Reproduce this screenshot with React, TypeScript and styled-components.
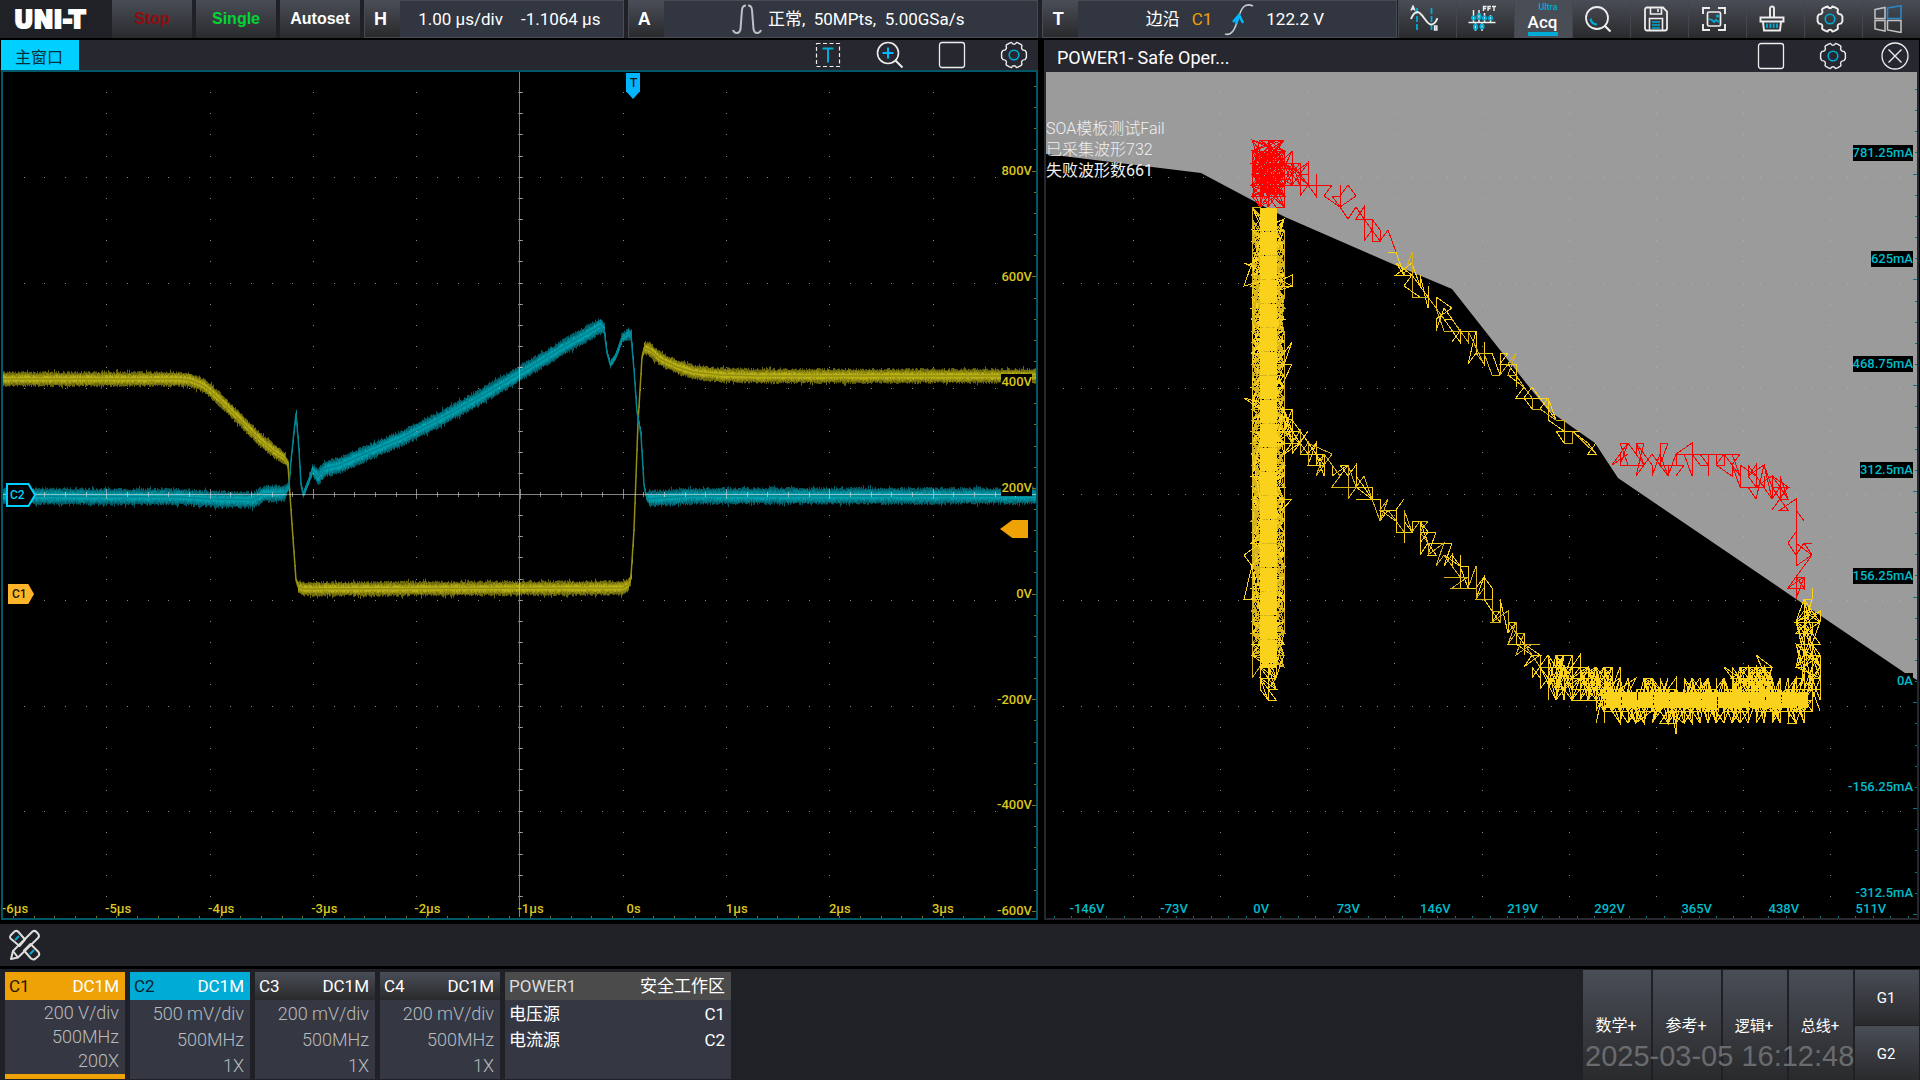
import React from "react";
import styled, { createGlobalStyle } from "styled-components";

const GlobalStyle = createGlobalStyle`
  *, *::before, *::after { box-sizing: border-box; }
  body { margin: 0; background: #000; }
  button { font: inherit; color: inherit; border: 0; padding: 0; margin: 0; background: none; cursor: pointer; }
`;

const ui = `Roboto, "Noto Sans CJK SC", sans-serif`;
const arial = `"Liberation Sans", "Noto Sans CJK SC", sans-serif`;
const raised = "linear-gradient(#494d56, #292a2c)";
const cyan = "#00acd6";

/* ---------- layout ---------- */

const Screen = styled.main`
  display: grid;
  grid-template-rows: auto minmax(0, 1fr) auto auto;
  min-height: 100vh;
  background: #000;
  color: #fff;
  font: 17px/20px ${ui};
`;

const TopBar = styled.header`
  display: flex;
  gap: 4px;
  height: 38px;
  background: #202126;
`;

const Logo = styled.h1`
  width: 108px;
  margin: 0;
  padding-left: 14px;
  font: bold 24px/40px "DejaVu Sans", sans-serif;
  -webkit-text-stroke: 2px #fff;
`;

const RunButton = styled.button<{ $color: string }>`
  width: 80px;
  background: ${raised};
  color: ${(p) => p.$color};
  font: bold 16px/38px ${arial};
`;

const Readout = styled.button<{ $grow: number }>`
  display: flex;
  flex: ${(p) => p.$grow} 1 0;
  border: 1px solid #474b54;
  background: #323640;
  text-align: left;
`;

const ReadoutKey = styled.strong`
  width: 35px;
  padding-right: 4px;
  background: ${raised};
  font: bold 18px/36px ${arial};
  text-align: center;
`;

const ReadoutBody = styled.span<{ $gap: number }>`
  display: flex;
  flex: 1;
  align-items: center;
  justify-content: center;
  gap: ${(p) => p.$gap}px;
  height: 36px;
  padding-right: 4px;
  white-space: nowrap;
`;

const SourceTag = styled.span`
  color: #eea205;
`;

const ToolButtons = styled.nav`
  display: flex;
  margin-left: -3px;
`;

const ToolButton = styled.button<{ $active?: boolean }>`
  display: flex;
  align-items: center;
  justify-content: center;
  width: 58px;
  padding-right: ${(p) => (p.$active ? 2 : 8)}px;
  border-left: 1px solid #43464c;
  background: ${(p) => (p.$active ? "#494d56" : raised)};
`;

const AcqLabel = styled.span`
  display: grid;
  width: 30px;
  height: 100%;
  padding-top: 3px;
  border-bottom: 4px solid ${cyan};
  font: 500 17px/16px ${ui};
  text-align: center;
  small { color: ${cyan}; font: 500 9px/8px ${ui}; text-align: right; }
`;

const AcqSlot = styled.span`
  height: 38px;
  padding-bottom: 2px;
`;

const Windows = styled.div`
  display: grid;
  grid-template-columns: 1037fr 875fr;
  gap: 6px;
  padding: 2px 1px 4px;
`;

const Pane = styled.section`
  display: flex;
  flex-direction: column;
  min-width: 0;
`;

const PaneHeader = styled.header<{ $active?: boolean }>`
  display: flex;
  align-items: center;
  gap: 34px;
  height: ${(p) => (p.$active ? 30 : 32)}px;
  padding-right: 10px;
  background: #26272f;
`;

const PaneTab = styled.h2`
  width: 78px;
  align-self: stretch;
  margin: 0 auto 0 0;
  padding-right: 2px;
  background: #00d0ff;
  color: #05303b;
  font: 16px/36px ${ui};
  text-align: center;
`;

const PaneTitle = styled.h2`
  margin: 0 auto 0 0;
  padding: 4px 0 0 13px;
  font: 18px/32px ${ui};
`;

const IconButton = styled.button`
  display: flex;
  align-items: center;
  justify-content: center;
  width: 28px;
  height: 28px;
`;

const PlotArea = styled.div<{ $active?: boolean }>`
  position: relative;
  flex: 1;
  min-height: 400px;
  border: 2px solid ${(p) => (p.$active ? "#005866" : "#26272f")};
  border-top-width: ${(p) => (p.$active ? 2 : 0)}px;
  overflow: hidden;
`;

const PlotDrawing = styled.svg`
  position: absolute;
  inset: 0;
  width: 100%;
  height: 100%;
`;

const AxisText = styled.span<{ $color: string; $solid?: boolean }>`
  position: absolute;
  background: ${(p) => (p.$solid ? "#000" : "transparent")};
  color: ${(p) => p.$color};
  font: 500 13px/16px ${ui};
  white-space: nowrap;
`;

const YText = styled(AxisText)`
  right: 4px;
  transform: translateY(-50%);
`;

const XText = styled(AxisText)`
  bottom: 1px;
  transform: translateX(-50%);
`;

const Marker = styled.span<{ $bg: string; $shape: string; $w: number; $h: number }>`
  position: absolute;
  width: ${(p) => p.$w}px;
  height: ${(p) => p.$h}px;
  background: ${(p) => p.$bg};
  clip-path: polygon(${(p) => p.$shape});
  color: #1c1606;
  font: 500 12px/20px ${ui};
  padding-left: 4px;
  transform: translateY(-50%);
`;

const HollowMarker = styled.span`
  position: absolute;
  width: 30px;
  height: 24px;
  transform: translateY(-50%);
  color: #00d0ff;
  font: 500 12px/24px ${ui};
  padding-left: 4px;
  svg { position: absolute; inset: 0; }
  b { position: relative; font-weight: 500; }
`;

const Results = styled.p`
  position: absolute;
  left: 0;
  top: 46px;
  margin: 0;
  color: #f0f0f0;
  font: 300 16px/21px ${ui};
  span { display: block; }
  span:last-child { font-weight: 400; }
`;

const Strip = styled.div`
  display: flex;
  align-items: center;
  height: 42px;
  padding: 4px 0 0 6px;
  background: #212227;
`;

const BottomBar = styled.footer`
  display: flex;
  gap: 5px;
  height: 114px;
  border-top: 3px solid #000;
  padding-left: 5px;
  background: #202126;
`;

const Card = styled.button<{ $wide?: boolean; $mark?: string }>`
  display: flex;
  flex-direction: column;
  width: ${(p) => (p.$wide ? 226 : 120)}px;
  margin: 3px 0 1px;
  border-bottom: ${(p) => (p.$mark ? `5px solid ${p.$mark}` : 0)};
  background: #353843;
`;

const CardHead = styled.span<{ $bg: string; $ink: string }>`
  display: flex;
  justify-content: space-between;
  width: 100%;
  padding: 0 6px 0 4px;
  background: ${(p) => p.$bg};
  line-height: 28px;
  b { color: ${(p) => p.$ink}; font-weight: 400; }
`;

const CardRows = styled.span<{ $tight?: boolean }>`
  display: grid;
  width: 100%;
  grid-auto-rows: ${(p) => (p.$tight ? 24 : 26)}px;
  padding: ${(p) => (p.$tight ? 0 : 1)}px 6px 0 4px;
  color: #b9bbbf;
  font-size: 18px;
  font-weight: 300;
  line-height: 26px;
  text-align: right;
`;

const PairRow = styled.span`
  display: flex;
  justify-content: space-between;
  color: #fff;
  font-size: 17px;
  font-weight: 400;
`;

const AddArea = styled.div`
  position: relative;
  display: flex;
  gap: 2px;
  margin-left: auto;
  padding: 1px 1px 0 0;
`;

const AddButton = styled.button<{ $narrow?: boolean }>`
  width: ${(p) => (p.$narrow ? 64 : 68)}px;
  padding: 2px 2px 0 0;
  background: ${raised};
  font-size: ${(p) => (p.$narrow ? 15 : 16)}px;
`;

const Groups = styled.div`
  display: grid;
  grid-template-rows: 1fr 1fr;
  gap: 1px;
`;

const Clock = styled.time`
  position: absolute;
  left: 2px;
  bottom: 8px;
  color: #6a6b6d;
  font: 29px/32px ${arial};
  white-space: nowrap;
  pointer-events: none;
`;

/* ---------- icons ---------- */

const Icon = ({ children }: { children: React.ReactNode }) => (
  <svg width="28" height="28" viewBox="0 0 28 28" fill="none" stroke="#eee" strokeWidth="1.6" aria-hidden="true">
    {children}
  </svg>
);

const SquareIcon = () => (
  <Icon><rect x="1.5" y="1.5" width="25" height="25" rx="2.5" strokeWidth="1.3" /></Icon>
);

const GearIcon = ({ weight = 1.4 }: { weight?: number }) => (
  <Icon>
    <path
      strokeWidth={weight}
      strokeLinejoin="round"
      d="M9.5 2.2 L11.6 1.4 C12.4 3.8 15.6 3.8 16.4 1.4 L18.5 2.2 L21.6 3.9 L22 5 C20.8 7.4 22.3 9.6 25 9.4 L26.4 11.5 V16.5 L25 18.6 C22.3 18.4 20.8 20.6 22 23 L21.6 24.1 L18.5 25.8 L16.4 26.6 C15.6 24.2 12.4 24.2 11.6 26.6 L9.5 25.8 L6.4 24.1 L6 23 C7.2 20.6 5.7 18.4 3 18.6 L1.6 16.5 V11.5 L3 9.4 C5.7 9.6 7.2 7.4 6 5 L6.4 3.9 Z"
    />
    <circle cx="14" cy="14" r="4.8" stroke={cyan} strokeWidth="1.6" />
  </Icon>
);

const TextBoxIcon = () => (
  <Icon>
    <rect x="2.5" y="2.5" width="23" height="23" strokeDasharray="4 2.5" strokeWidth="1.2" />
    <path d="M8.5 7.5h11M14 7.5v14" stroke={cyan} strokeWidth="2" />
  </Icon>
);

const ZoomInIcon = () => (
  <Icon>
    <circle cx="12" cy="12" r="10.5" />
    <path d="M19.5 19.5l7 7" strokeWidth="2" />
    <path d="M6.5 12h11M12 6.5v11" stroke="#00b8ff" strokeWidth="2" />
  </Icon>
);

const CloseIcon = () => (
  <Icon>
    <circle cx="14" cy="14" r="13" strokeWidth="1.3" />
    <path d="M7.5 7.5l13 13M20.5 7.5l-13 13" strokeWidth="1.4" />
  </Icon>
);

const CursorIcon = () => (
  <Icon>
    <path d="M7 3v22M21.5 3v22" stroke={cyan} strokeDasharray="6 2" strokeWidth="1.8" />
    <path d="M1 14C3 9 5.5 7 7.5 7 C12 7 16.5 19.5 21 19.5 C24 19.5 26 17 27.5 13" strokeWidth="1.9" />
    <path d="M1 5.5 L3 1 L5 5.5 M1.7 4h2.6M24.5 21v4h2.4v-4zM24.5 23h2.4" strokeWidth="1.4" />
  </Icon>
);

const FftIcon = () => (
  <Icon>
    <path d="M0.5 17.5h27M5.5 5v12M11 5v12M16.5 8v9M22.5 10v7M7.5 18v8M14 18v8" strokeWidth="1.5" />
    <g stroke={cyan} strokeWidth="1.8">
      <circle cx="5.5" cy="13" r="1.7" />
      <ellipse cx="11" cy="11.5" rx="1.7" ry="2.7" />
      <circle cx="16.5" cy="13" r="1.7" />
      <circle cx="22.5" cy="13" r="1.7" />
      <ellipse cx="7.5" cy="22" rx="1.7" ry="2.5" />
      <ellipse cx="14" cy="21.5" rx="1.7" ry="2" />
    </g>
    <path d="M15.5 6V1.5h3M15.5 3.5h2.5M20 6V1.5h3M20 3.5h2.5M24 1.5h4M26 1.5V6" strokeWidth="1.4" />
  </Icon>
);

const SearchIcon = () => (
  <Icon>
    <circle cx="13" cy="13" r="11" strokeWidth="1.8" />
    <path d="M20.5 20.5l6 6" strokeWidth="2.2" />
    <path d="M6.5 13.5c.5 3.5 3 5.8 6.5 6" stroke={cyan} strokeWidth="2" />
  </Icon>
);

const SaveIcon = () => (
  <Icon>
    <path d="M3 4.500a2 2 0 012-2h16l4 4v17a2 2 0 01-2 2H5a2 2 0 01-2-2z" strokeWidth="1.8" />
    <path d="M8.5 3v6h11V3M16 4v3M7.500 25V13.500h13V25" strokeWidth="1.6" />
    <path d="M10 17h8M10 20h8M10 23h8" stroke={cyan} strokeWidth="1.6" />
  </Icon>
);

const CaptureIcon = () => (
  <Icon>
    <path d="M3 9V3h7M18 3h7v6M25 19v6h-7M10 25H3v-6" strokeWidth="1.9" />
    <rect x="7.5" y="7" width="13" height="14" rx="1.5" strokeWidth="1.7" />
    <path d="M9 14l3 1 2 2 2-2 3 2" stroke={cyan} strokeWidth="1.8" />
    <circle cx="17.5" cy="11" r=".8" stroke={cyan} />
  </Icon>
);

const BroomIcon = () => (
  <Icon>
    <path d="M12 12V3.500a2 2 0 014 0V12M2.500 12.500h23v4h-23zM5 17l1 8.500h16l1-8.500" strokeWidth="1.9" />
    <path d="M9 18.500v4.500M12.300 18.500v4.500M15.600 18.500v4.500M19 18.500v4.500" stroke={cyan} strokeWidth="1.7" />
  </Icon>
);

const PanesIcon = () => (
  <Icon>
    <path d="M1 4.500l10-2v11H1zM1 15.500h10v10.500l-10-2zM13.500 15.500H27v12L13.500 25z" stroke="#c4c4c4" strokeWidth="1.5" />
    <path d="M13.500 3L27 .8v12.700H13.500z" stroke="#2b87c8" strokeWidth="1.6" />
  </Icon>
);

const PulseIcon = () => (
  <svg width="30" height="32" viewBox="0 0 30 32" fill="none" stroke="#bdc0c6" strokeWidth="2" aria-hidden="true">
    <path d="M1 27c1.500 4 6.500 4.500 7.500-1L10 7c.3-3 2-4.500 4-4.500M29 27c-1.500 4-6.500 4.500-7.500-1L20 7c-.3-3-2-4.500-4-4.500" />
  </svg>
);

const EdgeIcon = () => (
  <svg width="30" height="34" viewBox="0 0 30 34" fill="none" strokeWidth="1.6" aria-hidden="true">
    <path d="M1 32c7 2 10-5 13-15s6-17 15-13" stroke="#c5c8cd" />
    <path d="M9 20L15 13l4 8M15 13l-3 9" stroke="#00b8ff" strokeWidth="2.5" />
  </svg>
);

const PencilRulerIcon = () => (
  <svg width="38" height="34" viewBox="0 0 38 34" fill="none" stroke="#ddd" strokeWidth="2" strokeLinejoin="round" aria-hidden="true">
    <path d="M4.500 7.500l4-4q2-1.500 4 .5l6.500 7.500-5.500 6.500L4.500 10.500q-1.200-1.500 0-3zM24.500 16l8 8q1.500 2 0 4l-3.500 3q-2 1-4-.5l-7-8z" />
    <path d="M5 31l2-8L26.500 3.500q2-1.500 4 .5l1.800 2q1.500 2-.3 4L12 29.500zM7 23l5 6.500" />
    <path d="M9 12l4-4M24 26l4-4" stroke={cyan} />
  </svg>
);

/* ---------- traces ---------- */

function makeRandom(seed: number) {
  let a = seed * 2654435761;
  return () => {
    a = (a + 0x6d2b79f5) | 0;
    let t = Math.imul(a ^ (a >>> 15), 1 | a);
    t = (t + Math.imul(t ^ (t >>> 7), 61 | t)) ^ t;
    return ((t ^ (t >>> 14)) >>> 0) / 4294967296;
  };
}

type Knot = [x: number, y: number, half?: number];

/* Noise band round a centre line: one vertical stroke per column. */
function noiseBand(knots: Knot[], base: number, seed: number) {
  const rnd = makeRandom(seed);
  let outer = "";
  let middle = "";
  let inner = "";
  let k = 0;
  for (let x = knots[0][0]; x <= knots[knots.length - 1][0]; x++) {
    while (k < knots.length - 2 && x > knots[k + 1][0]) k++;
    const [x0, y0, h0 = base] = knots[k];
    const [x1, y1, h1 = base] = knots[k + 1];
    const t = (x - x0) / (x1 - x0);
    const y = y0 + (y1 - y0) * t;
    const h = h0 + (h1 - h0) * t;
    const reach = (low: number, span: number) => h * (low + rnd() * span);
    const spike = () => (h > 4 && rnd() > 0.93 ? 2 : 0);
    const column = (up: number, down: number) => `M${x}.5 ${(y - up).toFixed(1)}V${(y + down).toFixed(1)}`;
    outer += column(reach(0.8, 0.35) + spike(), reach(0.8, 0.35) + spike());
    middle += column(reach(0.5, 0.35), reach(0.5, 0.35));
    inner += column(reach(0.2, 0.35), reach(0.2, 0.35));
  }
  const line = "M" + knots.map(([x, y]) => `${x} ${y}`).join("L");
  return { outer, middle, inner, line };
}

const voltage = noiseBand(
  [
    [0, 307], [177, 307], [187, 308], [197, 312], [204, 316], [217, 328], [237, 348], [257, 368],
    [272, 380], [281, 386, 6], [285, 393, 4], [288, 438, 1], [293, 508, 1], [295, 515, 6],
    [300, 517], [620, 516], [625, 513, 6], [628, 504, 4], [631, 458, 1], [635, 351, 1], [639, 285, 2], [641, 276, 6],
    [647, 278], [657, 287], [674, 295], [690, 300], [717, 303], [757, 304], [1033, 304],
  ],
  7,
  11
);

const current = noiseBand(
  [
    [0, 424], [177, 425], [207, 427], [250, 428], [260, 422], [281, 421], [286, 413, 3], [288, 388, 2],
    [293, 341, 3], [296, 378, 2], [298, 413, 2], [300, 422, 4], [305, 410, 4], [309, 398, 6], [315, 405],
    [321, 397], [337, 393], [357, 384], [397, 367], [437, 347], [477, 325], [516, 302, 8], [557, 277],
    [597, 254], [601, 257, 5], [604, 281, 3], [607, 292, 4], [612, 285, 4], [619, 266, 5], [625, 262, 6],
    [628, 263, 5], [631, 298, 2], [634, 340, 2], [638, 363, 4], [641, 413, 1], [643, 424, 4], [646, 427],
    [687, 424], [1033, 424],
  ],
  8,
  29
);

type Band = ReturnType<typeof noiseBand>;
const Trace = ({ band, tones }: { band: Band; tones: [string, string, string] }) => (
  <g fill="none" strokeWidth="1">
    <path d={band.outer} stroke={tones[0]} />
    <path d={band.middle} stroke={tones[1]} />
    <path d={band.inner} stroke={tones[2]} />
    <path d={band.line} stroke={tones[1]} strokeWidth="1.5" />
  </g>
);

const DX = 8;
const DY = 11.2;
const snapX = (v: number) => Math.round((v + 2) / DX) * DX - 2;
const snapY = (v: number) => Math.round(Math.round((v - 1) / DY) * DY + 1);

type Path = [number, number][];

/* Jagged sample-to-sample walk along a path, held to the sampling lattice. */
function scribble(path: Path, step: number, jx: number, jy: number, seed: number) {
  const rnd = makeRandom(seed);
  let d = "";
  for (let i = 0; i < path.length - 1; i++) {
    const [ax, ay] = path[i];
    const [bx, by] = path[i + 1];
    const n = Math.max(1, Math.round(Math.hypot(bx - ax, by - ay) / step));
    for (let j = 0; j < n; j++) {
      const t = j / n;
      const x = snapX(ax + (bx - ax) * t + (rnd() - 0.5) * 2 * jx);
      const y = snapY(ay + (by - ay) * t + (rnd() - 0.5) * 2 * jy);
      d += `${d ? "L" : "M"}${x} ${y}`;
    }
  }
  return d;
}

const columnPath: Path = [[222, 156], [222, 586]];
const lowerBranch: Path = [[237, 362], [271, 384], [301, 406], [324, 425], [347, 443], [374, 463], [404, 485], [424, 506], [447, 530], [467, 562], [487, 588], [501, 600]];
const upperBranch: Path = [[352, 186], [374, 216], [404, 248], [427, 275], [457, 295], [487, 327], [507, 346], [531, 366], [554, 373]];
const floorPath: Path = [[554, 624], [580, 629], [762, 627]];

const soaYellow = [
  scribble(columnPath, 0.35, 19, 22, 3),
  scribble(columnPath, 0.5, 19, 26, 5),
  scribble([[221, 150], [221, 590]], 5, 25, 30, 2),
  scribble([[222, 570], [223, 622]], 0.8, 11, 12, 6),
  scribble([[234, 345], [252, 375]], 0.8, 10, 17, 10),
  scribble(lowerBranch, 2.2, 9, 15, 13),
  scribble(lowerBranch, 5, 10, 17, 14),
  scribble(upperBranch, 3, 9, 17, 17),
  scribble(upperBranch, 8, 9, 18, 18),
  scribble([[502, 604], [545, 612], [570, 618]], 0.25, 9, 21, 21),
  scribble(floorPath, 0.3, 8, 20, 24),
  scribble(floorPath, 1.2, 7, 28, 25),
  scribble([[690, 614], [722, 608]], 0.15, 10, 20, 27),
  scribble([[761, 535], [763, 625]], 0.7, 12, 22, 31),
];

const soaRed = [
  scribble([[222, 78], [222, 122]], 0.15, 19, 14, 41),
  scribble([[222, 68], [222, 122]], 1.5, 19, 17, 42),
  scribble([[226, 86], [226, 124]], 0.15, 14, 14, 43),
  scribble([[234, 94], [258, 108]], 0.5, 12, 14, 44),
  scribble([[237, 97], [271, 113], [307, 133], [324, 153], [347, 178]], 2.6, 10, 13, 47),
  scribble([[570, 382], [604, 385], [654, 391], [701, 405], [731, 408], [737, 428], [747, 451], [754, 478], [754, 508], [757, 524]], 2.6, 10, 16, 53),
  scribble([[575, 382], [654, 391], [701, 405], [731, 408], [742, 438]], 4, 10, 18, 54),
];

const Graticule = ({ w, h, axes }: { w: number; h: number; axes?: boolean }) => {
  const marks: string[] = [];
  for (let r = 1; r < 40; r++) for (let c = 1; c < 10; c++) marks.push(`M${Math.round((c * w) / 10)} ${Math.round((r * h) / 40)}h1`);
  for (let r = 1; r < 8; r++) for (let c = 1; c < 50; c++) if (c % 5) marks.push(`M${Math.round((c * w) / 50)} ${Math.round((r * h) / 8)}h1`);
  const ticks: string[] = [];
  if (axes) {
    for (let c = 1; c < 50; c++) ticks.push(`M${Math.round((c * w) / 50)} ${h / 2 - (c % 5 ? 2 : 5)}v${c % 5 ? 5 : 10}`);
    for (let r = 1; r < 40; r++) ticks.push(`M${w / 2 - 2} ${Math.round((r * h) / 40)}h5`);
  }
  return (
    <g fill="none" shapeRendering="crispEdges" transform="translate(0 -1)">
      <path d={marks.join("")} stroke="#bdbdbd" strokeOpacity="0.7" />
      {axes && <path d={`M0 ${h / 2}H${w}M${w / 2} 0V${h}${ticks.join("")}`} stroke="#d8d8d8" strokeOpacity="0.6" />}
    </g>
  );
};

const EdgeTicks = ({ w, h, x0, y0, dx, color }: { w: number; h: number; x0: number; y0: number; dx: number; color: string }) => {
  let d = "";
  for (let x = x0; x < w; x += dx) d += `M${Math.round(x)} ${h - 2}v2`;
  for (let y = y0, i = 0; y < h; y += h / 40, i++) d += `M${w - (i % 5 === 4 ? 4 : 2)} ${Math.round(y)}h4`;
  return <path d={d} stroke={color} fill="none" shapeRendering="crispEdges" />;
};

const pct = (v: number, total: number) => `${(v / total) * 100}%`;
const seriesY = (first: number, n: number) => Array.from({ length: n }, (_, i) => first + i * 105.7);

const voltLabels = ["800V", "600V", "400V", "200V", "0V", "-200V", "-400V", "-600V"];
const timeLabels = ["-6µs", "-5µs", "-4µs", "-3µs", "-2µs", "-1µs", "0s", "1µs", "2µs", "3µs"];
const ampLabels = ["781.25mA", "625mA", "468.75mA", "312.5mA", "156.25mA", "0A", "-156.25mA", "-312.5mA"];
const soaLabels = ["-146V", "-73V", "0V", "73V", "146V", "219V", "292V", "365V", "438V", "511V"];

const MainPlot = () => {
  const ys = seriesY(99, 8);
  return (
    <PlotArea $active>
      <PlotDrawing viewBox="0 0 1033 846" preserveAspectRatio="none" role="img" aria-label="C1 / C2">
        <Trace band={voltage} tones={["#6b670c", "#938d11", "#b8b015"]} />
        <Trace band={current} tones={["#005f69", "#008491", "#00a0af"]} />
        <Graticule w={1033} h={846} axes />
        <EdgeTicks w={1033} h={846} x0={10} y0={14} dx={20.66} color="#7d7414" />
      </PlotDrawing>
      {voltLabels.map((t, i) => (
        <YText key={t} $color="#d9c51f" $solid style={{ top: pct(ys[i], 846) }}>{t}</YText>
      ))}
      {timeLabels.map((t, i) => (
        <XText key={t} $color="#d9c51f" style={{ left: pct(12 + i * 103.1, 1033) }}>{t}</XText>
      ))}
      <Marker $bg="#00b4ff" $w={14} $h={26} $shape="0 0, 100% 0, 100% 70%, 50% 100%, 0 70%" style={{ left: pct(623, 1033), top: pct(14, 846) }}>T</Marker>
      <Marker $bg="#ffb52a" $w={26} $h={20} $shape="0 0, 78% 0, 100% 50%, 78% 100%, 0 100%" style={{ left: 5, top: pct(522, 846) }}>C1</Marker>
      <Marker $bg="#eea205" $w={28} $h={18} $shape="0 50%, 44% 0, 100% 0, 100% 100%, 44% 100%" style={{ right: 8, top: pct(457, 846) }} />
      <HollowMarker style={{ left: 3, top: pct(423, 846) }}>
        <svg width="30" height="24" viewBox="0 0 30 24" aria-hidden="true">
          <path d="M1 1h21.500l6.500 11-6.500 11H1z" fill="#000" stroke="#00d0ff" strokeWidth="2" />
        </svg>
        <b>C2</b>
      </HollowMarker>
    </PlotArea>
  );
};

const SoaPlot = () => {
  const ys = seriesY(81, 8);
  return (
    <PlotArea>
      <PlotDrawing viewBox="0 0 871 846" preserveAspectRatio="none" role="img" aria-label="SOA">
        <path d="M0 82L155 101L219 135L239 145L349 193L406 217L484 316L502 338L549 371L572 406L859 601L871 608V0H0z" fill="#9b9b9b" />
        <Graticule w={871} h={846} />
        <g fill="none" strokeWidth="1" shapeRendering="crispEdges">
          {soaYellow.map((d, i) => <path key={i} d={d} stroke={i === 1 || i === 6 || i === 8 ? "#d6b31d" : "#fad21c"} />)}
          <path d="M222.500 136V596" stroke="#fad21c" strokeWidth="17" strokeDasharray="23 1" />
          <path d="M560 628H762" stroke="#fad21c" strokeWidth="16" strokeDasharray="15 1" />
          {soaRed.map((d, i) => <path key={i} d={d} stroke="#f00" />)}
        </g>
        <EdgeTicks w={871} h={846} x0={8} y0={17} dx={17.42} color="#087682" />
      </PlotDrawing>
      {ampLabels.map((t, i) => (
        <YText key={t} $color="#00bccb" $solid style={{ top: pct(ys[i], 846) }}>{t}</YText>
      ))}
      {soaLabels.map((t, i) => (
        <XText key={t} $color="#00bccb" style={{ left: pct(41 + i * 87.1, 871) }}>{t}</XText>
      ))}
      <Results>
        <span>SOA模板测试Fail</span>
        <span>已采集波形732</span>
        <span>失败波形数661</span>
      </Results>
    </PlotArea>
  );
};

const tools = [
  { label: "Cursor", icon: <CursorIcon /> },
  { label: "FFT", icon: <FftIcon /> },
  { label: "Acq", icon: null },
  { label: "Search", icon: <SearchIcon /> },
  { label: "Save", icon: <SaveIcon /> },
  { label: "Capture", icon: <CaptureIcon /> },
  { label: "Clear", icon: <BroomIcon /> },
  { label: "Settings", icon: <GearIcon weight={1.9} /> },
  { label: "Windows", icon: <PanesIcon /> },
];

const channels = [
  { name: "C1", bg: "#eea205", ink: "#1d1503", rows: ["200 V/div", "500MHz", "200X"], mark: "#eea205" },
  { name: "C2", bg: "#00acd6", ink: "#04222b", rows: ["500 mV/div", "500MHz", "1X"] },
  { name: "C3", bg: raised, ink: "#fff", rows: ["200 mV/div", "500MHz", "1X"] },
  { name: "C4", bg: raised, ink: "#fff", rows: ["200 mV/div", "500MHz", "1X"] },
];

export default function App() {
  return (
    <Screen>
      <GlobalStyle />
      <TopBar>
        <Logo>UNI-T</Logo>
        <RunButton $color="#8f0d10">Stop</RunButton>
        <RunButton $color="#00d632">Single</RunButton>
        <RunButton $color="#fff">Autoset</RunButton>
        <Readout $grow={259}>
          <ReadoutKey>H</ReadoutKey>
          <ReadoutBody $gap={18}><span>1.00 µs/div</span><span>-1.1064 µs</span></ReadoutBody>
        </Readout>
        <Readout $grow={410}>
          <ReadoutKey>A</ReadoutKey>
          <ReadoutBody $gap={6}><PulseIcon /><span>正常,&nbsp; 50MPts,&nbsp; 5.00GSa/s</span></ReadoutBody>
        </Readout>
        <Readout $grow={355}>
          <ReadoutKey>T</ReadoutKey>
          <ReadoutBody $gap={12}><span>边沿</span><SourceTag>C1</SourceTag><EdgeIcon /><span>122.2 V</span></ReadoutBody>
        </Readout>
        <ToolButtons>
          {tools.map((t) => (
            <ToolButton key={t.label} aria-label={t.label} $active={!t.icon}>
              {t.icon ?? <AcqSlot><AcqLabel><small>Ultra</small>Acq</AcqLabel></AcqSlot>}
            </ToolButton>
          ))}
        </ToolButtons>
      </TopBar>

      <Windows>
        <Pane>
          <PaneHeader $active>
            <PaneTab>主窗口</PaneTab>
            <IconButton aria-label="Label"><TextBoxIcon /></IconButton>
            <IconButton aria-label="Zoom"><ZoomInIcon /></IconButton>
            <IconButton aria-label="Maximize"><SquareIcon /></IconButton>
            <IconButton aria-label="Settings"><GearIcon /></IconButton>
          </PaneHeader>
          <MainPlot />
        </Pane>
        <Pane>
          <PaneHeader>
            <PaneTitle>POWER1- Safe Oper...</PaneTitle>
            <IconButton aria-label="Maximize"><SquareIcon /></IconButton>
            <IconButton aria-label="Settings"><GearIcon /></IconButton>
            <IconButton aria-label="Close"><CloseIcon /></IconButton>
          </PaneHeader>
          <SoaPlot />
        </Pane>
      </Windows>

      <Strip>
        <button aria-label="Tools"><PencilRulerIcon /></button>
      </Strip>

      <BottomBar>
        {channels.map((c) => (
          <Card key={c.name} $mark={c.mark}>
            <CardHead $bg={c.bg} $ink={c.ink}><b>{c.name}</b><span>DC1M</span></CardHead>
            <CardRows $tight={!!c.mark}>{c.rows.map((r) => <span key={r}>{r}</span>)}</CardRows>
          </Card>
        ))}
        <Card $wide>
          <CardHead $bg="#4b4b4b" $ink="#ddd"><b>POWER1</b><span>安全工作区</span></CardHead>
          <CardRows>
            <PairRow><span>电压源</span><span>C1</span></PairRow>
            <PairRow><span>电流源</span><span>C2</span></PairRow>
          </CardRows>
        </Card>
        <AddArea>
          <AddButton>数学+</AddButton>
          <AddButton>参考+</AddButton>
          <AddButton $narrow>逻辑+</AddButton>
          <AddButton $narrow>总线+</AddButton>
          <Groups>
            <AddButton $narrow>G1</AddButton>
            <AddButton $narrow>G2</AddButton>
          </Groups>
          <Clock dateTime="2025-03-05T16:12:48">2025-03-05 16:12:48</Clock>
        </AddArea>
      </BottomBar>
    </Screen>
  );
}
